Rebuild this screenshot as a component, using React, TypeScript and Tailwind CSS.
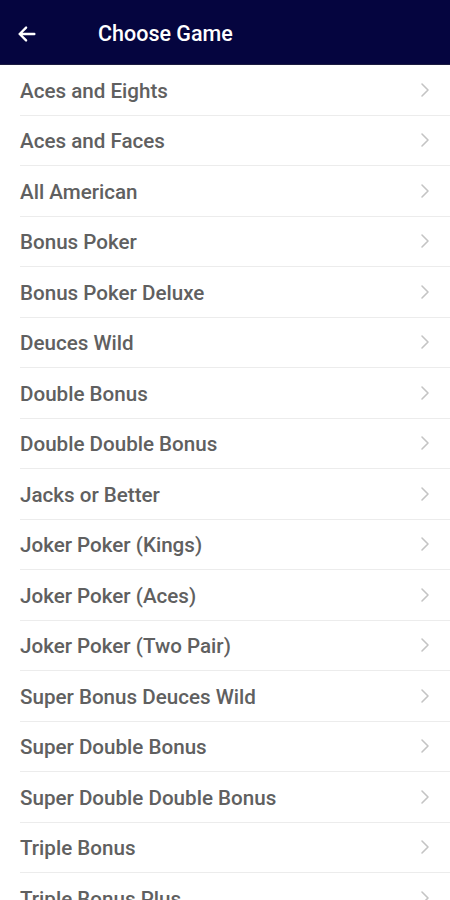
import React from 'react';

const games = [
  'Aces and Eights',
  'Aces and Faces',
  'All American',
  'Bonus Poker',
  'Bonus Poker Deluxe',
  'Deuces Wild',
  'Double Bonus',
  'Double Double Bonus',
  'Jacks or Better',
  'Joker Poker (Kings)',
  'Joker Poker (Aces)',
  'Joker Poker (Two Pair)',
  'Super Bonus Deuces Wild',
  'Super Double Bonus',
  'Super Double Double Bonus',
  'Triple Bonus',
  'Triple Bonus Plus',
  'Triple Double Bonus',
];

export default function App() {
  return (
    <div className="w-[450px] h-[900px] overflow-hidden bg-white" style={{ fontFamily: 'Roboto, "Noto Sans", sans-serif' }}>
      {/* Header */}
      <header className="h-[65px] bg-[#05053f] flex items-center pt-[4px] border-b border-[#1c1c40]">
        <button className="w-[54px] pl-[16px] flex items-center text-white" aria-label="Back">
          <svg width="22" height="22" viewBox="0 0 24 24" fill="none" stroke="currentColor" strokeWidth={2.6} strokeLinecap="round" strokeLinejoin="round">
            <path d="M20 12H4M11 5l-7 7 7 7" />
          </svg>
        </button>
        <h1 className="ml-[44px] text-white text-[21.5px] font-medium">Choose Game</h1>
      </header>

      {/* Game list */}
      <ul className="pl-[20px]">
        {games.map(name => (
          <li
            key={name}
            className="h-[50.5px] flex items-center justify-between border-b border-[#ececec] pr-[18px]"
          >
            <span className="pt-[3px] text-[20.6px] font-medium text-[#606060]">{name}</span>
            <svg width="14" height="16" viewBox="0 0 14 16" fill="none" stroke="#c4c4c4" strokeWidth={1.6} strokeLinecap="round" strokeLinejoin="round">
              <path d="M4 2l6 6-6 6" />
            </svg>
          </li>
        ))}
      </ul>
    </div>
  );
}
